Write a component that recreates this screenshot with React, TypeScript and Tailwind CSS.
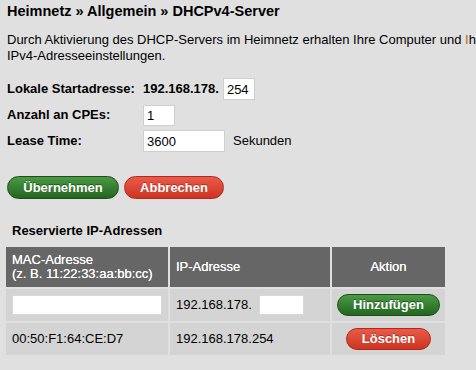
import React from "react";

const font = { fontFamily: '"Liberation Sans", Arial, sans-serif' };

const App = () => {
  return (
    <div
      className="w-[476px] h-[370px] overflow-hidden bg-[#e0e0e0] text-[13px] text-black"
      style={font}
    >
      <div className="w-[700px] pl-[7px] pt-[2px]">
        <h1 className="text-[14.5px] font-bold leading-[18px]">
          Heimnetz » Allgemein » DHCPv4-Server
        </h1>
        <p className="mt-[12px] leading-[16px] whitespace-nowrap">
          Durch Aktivierung des DHCP-Servers im Heimnetz erhalten Ihre Computer und{" "}
          <span className="text-[#b06a20]">I</span>hre Netzwerkgeräte automatisch die
          <br />
          IPv4-Adresseeinstellungen.
        </p>
      </div>

      <div className="pl-[7px] mt-[14px] flex flex-col gap-[4px]">
        <div className="flex items-center h-[22px]">
          <span className="w-[136px] font-bold">Lokale Startadresse:</span>
          <span className="font-bold">192.168.178.</span>
          <input
            defaultValue="254"
            className="ml-[4px] w-[32px] h-[22px] bg-white border border-[#cfcfcf] px-[3px] outline-none"
          />
        </div>
        <div className="flex items-center h-[22px]">
          <span className="w-[136px] font-bold">Anzahl an CPEs:</span>
          <input
            defaultValue="1"
            className="w-[32px] h-[21px] bg-white border border-[#cfcfcf] px-[3px] outline-none"
          />
        </div>
        <div className="flex items-center h-[22px]">
          <span className="w-[136px] font-bold">Lease Time:</span>
          <input
            defaultValue="3600"
            className="w-[82px] h-[22px] bg-white border border-[#cfcfcf] px-[3px] outline-none"
          />
          <span className="ml-[8px]">Sekunden</span>
        </div>
      </div>

      <div className="pl-[7px] mt-[24px] flex gap-[5px]">
        <button className="w-[112px] h-[23px] rounded-full border border-[#1d4d1d] bg-gradient-to-b from-[#4a9a44] to-[#23661f] text-white font-bold text-[13px] [text-shadow:0_-1px_0_rgba(0,0,0,0.4)]">
          Übernehmen
        </button>
        <button className="w-[100px] h-[23px] rounded-full border border-[#b2281c] bg-gradient-to-b from-[#ea5a48] to-[#cc3422] text-white font-bold text-[13px] [text-shadow:0_-1px_0_rgba(0,0,0,0.3)]">
          Abbrechen
        </button>
      </div>

      <h2 className="pl-[12px] mt-[24px] font-bold leading-[16px]">
        Reservierte IP-Adressen
      </h2>

      <table className="ml-[4px] mt-[6px] border-separate border-spacing-[2px]">
        <thead>
          <tr className="h-[40px] bg-[#666666] text-white leading-[14px] [text-shadow:0_0_0.4px_#ffffff]">
            <th className="w-[162px] px-[6px] text-left font-normal">
              MAC-Adresse
              <br />
              (z. B. 11:22:33:aa:bb:cc)
            </th>
            <th className="w-[160px] px-[6px] text-left font-normal">IP-Adresse</th>
            <th className="w-[113px] px-[6px] text-center font-normal">Aktion</th>
          </tr>
        </thead>
        <tbody>
          <tr className="h-[32px] bg-[#d4d4d4]">
            <td className="px-[6px]">
              <input className="block w-[150px] h-[20px] bg-white border border-[#d8d8d8] outline-none" />
            </td>
            <td className="px-[6px]">
              <div className="flex items-center">
                <span>192.168.178.</span>
                <input className="ml-[7px] w-[45px] h-[20px] bg-white border border-[#d8d8d8] outline-none" />
              </div>
            </td>
            <td className="text-center">
              <button className="w-[103px] h-[22px] rounded-full border border-[#1d4d1d] bg-gradient-to-b from-[#4a9a44] to-[#23661f] text-white font-bold text-[13px] [text-shadow:0_-1px_0_rgba(0,0,0,0.4)]">
                Hinzufügen
              </button>
            </td>
          </tr>
          <tr className="h-[32px] bg-[#d4d4d4]">
            <td className="px-[6px]">00:50:F1:64:CE:D7</td>
            <td className="px-[6px]">192.168.178.254</td>
            <td className="text-center">
              <button className="w-[85px] h-[22px] rounded-full border border-[#b2281c] bg-gradient-to-b from-[#ea5a48] to-[#cc3422] text-white font-bold text-[13px] [text-shadow:0_-1px_0_rgba(0,0,0,0.3)]">
                Löschen
              </button>
            </td>
          </tr>
        </tbody>
      </table>
    </div>
  );
};

export default App;
